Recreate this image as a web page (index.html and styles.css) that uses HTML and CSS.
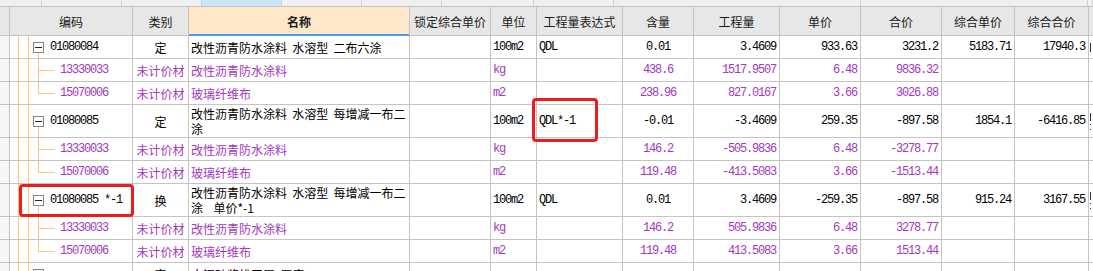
FILE: index.html
```html
<!DOCTYPE html>
<html lang="zh">
<head>
<meta charset="utf-8">
<title>Grid</title>
<link rel="stylesheet" href="styles.css">
</head>
<body>
<div class="strip">
  <span></span><span></span><span></span><span class="sel"></span><span></span><span></span><span></span><span></span><span></span><span></span><span></span>
</div>

<div class="row head">
  <div class="g0"></div>
  <div>编码</div>
  <div>类别</div>
  <div class="hname">名称</div>
  <div>锁定综合单价</div>
  <div>单位</div>
  <div>工程量表达式</div>
  <div>含量</div>
  <div>工程量</div>
  <div>单价</div>
  <div>合价</div>
  <div>综合单价</div>
  <div>综合合价</div>
  <div></div>
</div>

<div class="row">
  <div class="g0"></div>
  <div class="code parent"><i class="tbox"></i><span class="n">01080084</span></div>
  <div class="c">定</div>
  <div class="name"><span>改性沥青防水涂料 水溶型 二布六涂</span></div>
  <div></div>
  <div class="n">100m2</div>
  <div class="n">QDL</div>
  <div class="n c">0.01</div>
  <div class="n r">3.4609</div>
  <div class="n r">933.63</div>
  <div class="n r">3231.2</div>
  <div class="n r">5183.71</div>
  <div class="n r">17940.3</div>
  <div class="x"><i class="frag"></i></div>
</div>

<div class="row sub">
  <div class="g0"></div>
  <div class="code child"><span class="n">13330033</span></div>
  <div class="c">未计价材</div>
  <div class="name"><span>改性沥青防水涂料</span></div>
  <div></div>
  <div class="n">kg</div>
  <div></div>
  <div class="n c">438.6</div>
  <div class="n r">1517.9507</div>
  <div class="n r">6.48</div>
  <div class="n r">9836.32</div>
  <div></div>
  <div></div>
  <div class="x"></div>
</div>

<div class="row sub">
  <div class="g0"></div>
  <div class="code child last"><span class="n">15070006</span></div>
  <div class="c">未计价材</div>
  <div class="name"><span>玻璃纤维布</span></div>
  <div></div>
  <div class="n">m2</div>
  <div></div>
  <div class="n c">238.96</div>
  <div class="n r">827.0167</div>
  <div class="n r">3.66</div>
  <div class="n r">3026.88</div>
  <div></div>
  <div></div>
  <div class="x"></div>
</div>

<div class="row tall">
  <div class="g0"></div>
  <div class="code parent"><i class="tbox"></i><span class="n">01080085</span></div>
  <div class="c">定</div>
  <div class="name"><span>改性沥青防水涂料 水溶型 每增减一布二涂</span></div>
  <div></div>
  <div class="n">100m2</div>
  <div class="n marked">QDL*-1<b class="mark mark-expr"></b></div>
  <div class="n c">-0.01</div>
  <div class="n r">-3.4609</div>
  <div class="n r">259.35</div>
  <div class="n r">-897.58</div>
  <div class="n r">1854.1</div>
  <div class="n r">-6416.85</div>
  <div class="x"><i class="frag multi"></i></div>
</div>

<div class="row sub">
  <div class="g0"></div>
  <div class="code child"><span class="n">13330033</span></div>
  <div class="c">未计价材</div>
  <div class="name"><span>改性沥青防水涂料</span></div>
  <div></div>
  <div class="n">kg</div>
  <div></div>
  <div class="n c">146.2</div>
  <div class="n r">-505.9836</div>
  <div class="n r">6.48</div>
  <div class="n r">-3278.77</div>
  <div></div>
  <div></div>
  <div class="x"></div>
</div>

<div class="row sub">
  <div class="g0"></div>
  <div class="code child last"><span class="n">15070006</span></div>
  <div class="c">未计价材</div>
  <div class="name"><span>玻璃纤维布</span></div>
  <div></div>
  <div class="n">m2</div>
  <div></div>
  <div class="n c">119.48</div>
  <div class="n r">-413.5083</div>
  <div class="n r">3.66</div>
  <div class="n r">-1513.44</div>
  <div></div>
  <div></div>
  <div class="x"></div>
</div>

<div class="row tall">
  <div class="g0"></div>
  <div class="code parent marked"><i class="tbox"></i><span class="n">01080085 *-1</span><b class="mark mark-code"></b></div>
  <div class="c">换</div>
  <div class="name"><span>改性沥青防水涂料 水溶型 每增减一布二涂&nbsp; 单价*-1</span></div>
  <div></div>
  <div class="n">100m2</div>
  <div class="n">QDL</div>
  <div class="n c">0.01</div>
  <div class="n r">3.4609</div>
  <div class="n r">-259.35</div>
  <div class="n r">-897.58</div>
  <div class="n r">915.24</div>
  <div class="n r">3167.55</div>
  <div class="x"><i class="frag multi"></i></div>
</div>

<div class="row sub">
  <div class="g0"></div>
  <div class="code child"><span class="n">13330033</span></div>
  <div class="c">未计价材</div>
  <div class="name"><span>改性沥青防水涂料</span></div>
  <div></div>
  <div class="n">kg</div>
  <div></div>
  <div class="n c">146.2</div>
  <div class="n r">505.9836</div>
  <div class="n r">6.48</div>
  <div class="n r">3278.77</div>
  <div></div>
  <div></div>
  <div class="x"></div>
</div>

<div class="row sub">
  <div class="g0"></div>
  <div class="code child last"><span class="n">15070006</span></div>
  <div class="c">未计价材</div>
  <div class="name"><span>玻璃纤维布</span></div>
  <div></div>
  <div class="n">m2</div>
  <div></div>
  <div class="n c">119.48</div>
  <div class="n r">413.5083</div>
  <div class="n r">3.66</div>
  <div class="n r">1513.44</div>
  <div></div>
  <div></div>
  <div class="x"></div>
</div>

<div class="row">
  <div class="g0"></div>
  <div class="code closed"><i class="tbox plus"></i></div>
  <div class="c">定</div>
  <div class="name"><span>水泥砂浆找平层 厚度20mm</span></div>
  <div></div>
  <div></div>
  <div></div>
  <div></div>
  <div></div>
  <div></div>
  <div></div>
  <div></div>
  <div></div>
  <div class="x"></div>
</div>
</body>
</html>
```

FILE: styles.css
```css
:root {
  --line: #c4c4c4;
  --tree: #ffc67a;
  --purple: #a238c0;
  --cols: 10px 123px 56px 221px 81px 46px 86px 71px 86px 81px 81px 73px 74px 60px;
}

* {
  box-sizing: border-box;
}

body {
  margin: 0;
  width: 1093px;
  height: 271px;
  overflow: hidden;
  background: #fff;
  font-family: "Noto Sans CJK SC", sans-serif;
  font-size: 12px;
  color: #000;
}

.strip {
  display: grid;
  grid-template-columns: 42px 80px 80px 80px 80px 80px 92px 80px 247px 227px 1fr;
  height: 7px;
  background: #f0f0f0;
  border-bottom: 1px solid var(--line);
}

.strip span {
  border-right: 1px solid #d2d2d2;
}

.strip .sel {
  background: #cde5f8;
}

.row {
  display: grid;
  grid-template-columns: var(--cols);
  height: 23px;
}

.row.tall {
  height: 33px;
}

.row > div {
  display: flex;
  align-items: center;
  padding: 0 2px;
  border-right: 1px solid var(--line);
  border-bottom: 1px solid var(--line);
  white-space: nowrap;
  min-width: 0;
}

.row > .g0 {
  padding: 0;
  background: #f6f6f6;
}

.head {
  height: 29px;
  background: #e7e7e7;
}

.head > div {
  justify-content: center;
  color: #1a1a1a;
}

.head > .g0 {
  background: #e7e7e7;
}

.head > .hname {
  background: #ffe7c9;
  font-weight: bold;
  border-bottom-color: #4a9af2;
  box-shadow: inset 0 -1px 0 #4a9af2;
}

.sub {
  color: var(--purple);
}

.n {
  font-family: "Liberation Mono", monospace;
  font-size: 12px;
  letter-spacing: -1.2px;
}

.row > .c {
  justify-content: center;
}

.row > .r {
  justify-content: flex-end;
  padding-right: 3px;
}

.row > .name {
  white-space: normal;
  line-height: 15px;
  word-spacing: 2.5px;
}

.row > .x {
  padding: 0 0 0 1px;
  border-right: none;
}

/* clipped remains of the next column's content */
.frag {
  width: 1px;
  height: 9px;
  background: #333;
}

.frag.multi {
  height: 17px;
  background: linear-gradient(#333, #333) 0 0 / 1px 8px no-repeat,
    linear-gradient(#333, #333) 0 11px / 1px 1px no-repeat,
    linear-gradient(#333, #333) 0 16px / 1px 1px no-repeat;
}

/* tree column */
.row > .code {
  padding: 0;
  background:
    linear-gradient(var(--tree), var(--tree)) 8px 0 / 1px 100% no-repeat,
    linear-gradient(var(--tree), var(--tree)) 18px 0 / 1px 100% no-repeat;
}

.row > .code.parent {
  padding-left: 23px;
  background:
    linear-gradient(var(--tree), var(--tree)) 8px 0 / 1px 100% no-repeat,
    linear-gradient(var(--tree), var(--tree)) 18px 0 / 1px 100% no-repeat,
    linear-gradient(var(--tree), var(--tree)) 28px 100% / 1px 50% no-repeat;
}

.row > .code.closed {
  padding-left: 23px;
}

.row > .code.child {
  padding-left: 50px;
  background:
    linear-gradient(var(--tree), var(--tree)) 8px 0 / 1px 100% no-repeat,
    linear-gradient(var(--tree), var(--tree)) 18px 0 / 1px 100% no-repeat,
    linear-gradient(var(--tree), var(--tree)) 28px 0 / 1px 100% no-repeat,
    linear-gradient(var(--tree), var(--tree)) 28px 50% / 17px 1px no-repeat;
}

.row > .code.child.last {
  background:
    linear-gradient(var(--tree), var(--tree)) 8px 0 / 1px 100% no-repeat,
    linear-gradient(var(--tree), var(--tree)) 18px 0 / 1px 100% no-repeat,
    linear-gradient(var(--tree), var(--tree)) 28px 0 / 1px 50% no-repeat,
    linear-gradient(var(--tree), var(--tree)) 28px 50% / 17px 1px no-repeat;
}

.tbox {
  flex: none;
  width: 11px;
  height: 11px;
  margin-right: 6px;
  border: 1px solid #858585;
  background: linear-gradient(#222, #222) center / 7px 1px no-repeat, #fff;
}

.tbox.plus {
  background:
    linear-gradient(#222, #222) center / 7px 1px no-repeat,
    linear-gradient(#222, #222) center / 1px 7px no-repeat,
    #fff;
}

/* red annotation frames */
.row > .marked {
  position: relative;
}

.mark {
  position: absolute;
  border: 3px solid #f01c1c;
  border-radius: 4px;
  pointer-events: none;
}

.mark-expr {
  left: -5px;
  top: -7px;
  width: 66px;
  height: 44px;
}

.mark-code {
  left: 9px;
  top: 0;
  width: 115px;
  height: 33px;
}
```
